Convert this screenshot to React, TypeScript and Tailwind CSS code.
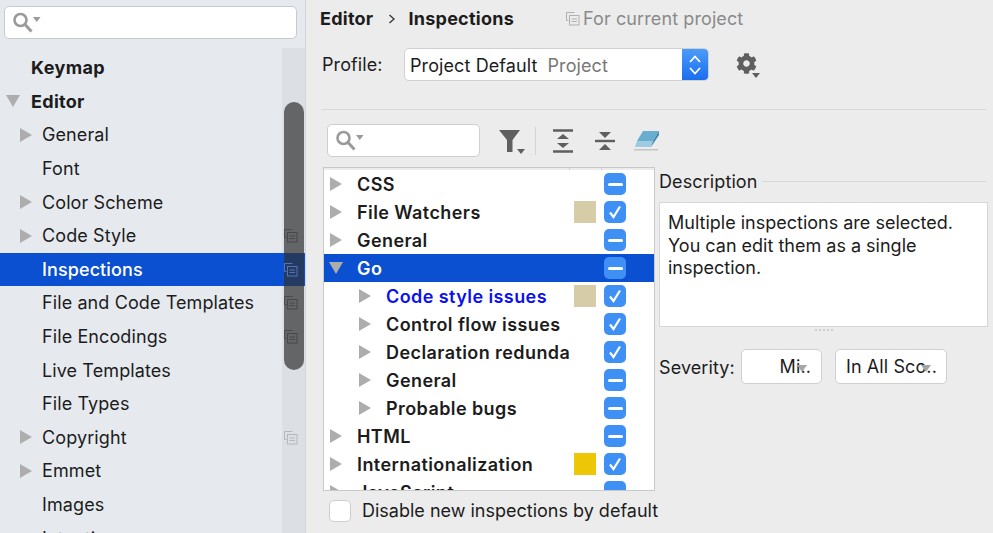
import { FaCog } from "react-icons/fa"

const FONT = "font-['Inter','Liberation_Sans',sans-serif]"

interface NavItem {
  label: string
  arrow?: boolean
  scoped?: boolean
}

const navItems: NavItem[] = [
  { label: "General", arrow: true },
  { label: "Font" },
  { label: "Color Scheme", arrow: true },
  { label: "Code Style", arrow: true, scoped: true },
  { label: "Inspections", scoped: true },
  { label: "File and Code Templates", scoped: true },
  { label: "File Encodings", scoped: true },
  { label: "Live Templates" },
  { label: "File Types" },
  { label: "Copyright", arrow: true, scoped: true },
  { label: "Emmet", arrow: true },
  { label: "Images" },
  { label: "Intentions" },
]

interface InspectionRow {
  label: string
  depth: 0 | 1
  state: "mixed" | "checked"
  swatch?: string
  selected?: boolean
  blue?: boolean
}

const rows: InspectionRow[] = [
  { label: "CSS", depth: 0, state: "mixed" },
  { label: "File Watchers", depth: 0, state: "checked", swatch: "bg-[#d6cda8]" },
  { label: "General", depth: 0, state: "mixed" },
  { label: "Go", depth: 0, state: "mixed", selected: true },
  { label: "Code style issues", depth: 1, state: "checked", swatch: "bg-[#d6cda8]", blue: true },
  { label: "Control flow issues", depth: 1, state: "checked" },
  { label: "Declaration redunda", depth: 1, state: "checked" },
  { label: "General", depth: 1, state: "mixed" },
  { label: "Probable bugs", depth: 1, state: "mixed" },
  { label: "HTML", depth: 0, state: "mixed" },
  { label: "Internationalization", depth: 0, state: "checked", swatch: "bg-[#edc706]" },
  { label: "JavaScript", depth: 0, state: "mixed" },
]

function Arrow({ down = false }: { down?: boolean }) {
  return (
    <svg width="14" height="14" viewBox="0 0 14 14" className="shrink-0">
      {down ? (
        <polygon points="0,1 14,1 7,13" fill="#adadad" />
      ) : (
        <polygon points="1,0 13,7 1,14" fill="#adadad" />
      )}
    </svg>
  )
}

function ScopeIcon({ color = "#b4b8bc" }: { color?: string }) {
  return (
    <svg width="15" height="15" viewBox="0 0 15 15" fill="none" stroke={color} strokeWidth="1" className="relative z-10 shrink-0">
      <path d="M9.5 1.5H1.5V9.5H3.5" />
      <rect x="4.5" y="4.5" width="9.5" height="9.5" />
      <path d="M6.5 8H12M6.5 10.5H12" />
    </svg>
  )
}

function SearchIcon() {
  return (
    <svg width="28" height="22" viewBox="0 0 28 22" fill="none" className="shrink-0">
      <circle cx="7.5" cy="8" r="6" stroke="#9a9a9a" strokeWidth="2.6" />
      <path d="M12 12.5L18.5 19.5" stroke="#9a9a9a" strokeWidth="3" />
      <polygon points="20,5 27.5,5 23.75,10" fill="#9a9a9a" />
    </svg>
  )
}

function TriCheck({ state }: { state: "mixed" | "checked" }) {
  return (
    <span className="flex h-[22px] w-[22px] shrink-0 items-center justify-center rounded-[5px] bg-[#3f90f5]">
      {state === "mixed" ? (
        <span className="h-[3px] w-[15px] rounded-sm bg-white" />
      ) : (
        <svg width="14" height="14" viewBox="0 0 14 14" fill="none">
          <path d="M2 7.5L5.5 12L12 1.5" stroke="white" strokeWidth="2.2" />
        </svg>
      )}
    </span>
  )
}

function SmallCaret() {
  return (
    <svg width="10" height="7" viewBox="0 0 10 7" className="absolute">
      <polygon points="0,0 10,0 5,7" fill="#a6a6a6" />
    </svg>
  )
}

export default function App() {
  return (
    <div className={`flex h-[533px] w-[993px] overflow-hidden bg-[#ececec] text-[18px] tracking-[0.1px] text-[#1c1c1c] ${FONT}`}>
      {/* Left settings tree */}
      <aside className="relative flex h-full w-[306px] shrink-0 flex-col border-r border-[#d2d4d7] bg-[#e6eaef]">
        <div className="mx-[4px] mt-[6px] flex h-[33px] w-[293px] items-center rounded-[5px] border border-[#c6cacf] bg-white pl-[8px]">
          <SearchIcon />
        </div>
        <div className="relative mt-[9px] flex-1 overflow-hidden">
          <div className="absolute bottom-0 right-0 top-0 w-[23px] bg-[#dcdfe4]" />
          <div className="relative pt-[3px]">
            <div className="flex h-[33.6px] items-center pl-[31px] font-bold tracking-[0.4px]">Keymap</div>
            <div className="flex h-[33.6px] items-center gap-[11px] pl-[6px] font-bold tracking-[0.3px]">
              <Arrow down />
              Editor
            </div>
            {navItems.map((item) => {
              const selected = item.label === "Inspections"
              const underThumb = item.scoped && item.label !== "Copyright"
              return (
                <div
                  key={item.label}
                  className={`flex h-[33.6px] items-center pr-[7px] ${selected ? "bg-[#0a50d1] font-medium text-white" : ""}`}
                >
                  <span className="flex w-[42px] shrink-0 justify-start pl-[19px]">{item.arrow && <Arrow />}</span>
                  <span className="flex-1">{item.label}</span>
                  {item.scoped && <ScopeIcon color={selected ? "#5274b8" : underThumb ? "#48494b" : "#b4b8bc"} />}
                </div>
              )
            })}
          </div>
          {/* scrollbar thumb */}
          <div className="absolute right-[1px] top-[54px] h-[268px] w-[20px] rounded-[10px] bg-[#303030]/70" />
        </div>
      </aside>

      {/* Right panel */}
      <main className="flex min-w-0 flex-1 flex-col pl-[15px]">
        <div className="-ml-px flex h-[36px] items-center pt-[1px]">
          <span className="font-bold tracking-[0.25px]">Editor</span>
          <svg width="8" height="10" viewBox="0 0 8 10" fill="none" className="ml-[15px] mr-[12px]">
            <path d="M1.5 1L6 5L1.5 9" stroke="#333" strokeWidth="1.3" />
          </svg>
          <span className="font-bold tracking-[0.25px]">Inspections</span>
          <span className="ml-[51px]">
            <ScopeIcon color="#b0b0b0" />
          </span>
          <span className="ml-[3px] text-[#8a8a8a]">For current project</span>
        </div>

        <div className="mt-[12px] flex h-[33px] items-center pl-[1px]">
          <span className="w-[82px]">Profile:</span>
          <div className="flex h-[33px] w-[305px] overflow-hidden rounded-[5px] border border-[#d0d0d0] bg-white">
            <div className="flex flex-1 items-center gap-[10px] pl-[5px] pt-[1px]">
              <span>Project Default</span>
              <span className="text-[#777]">Project</span>
            </div>
            <div className="flex w-[26px] items-center justify-center bg-gradient-to-b from-[#4b9bf8] to-[#1a6df0]">
              <svg width="14" height="24" viewBox="0 0 14 24" fill="none" stroke="white" strokeWidth="1.8">
                <path d="M2 9L7 3.5L12 9M2 15L7 20.5L12 15" />
              </svg>
            </div>
          </div>
          <span className="relative ml-[27px] flex h-[24px] w-[26px] text-[#5f5f5f]">
            <FaCog size={21} />
            <svg width="8" height="5" viewBox="0 0 8 5" className="absolute bottom-[-1px] right-[2px]">
              <polygon points="0,0 8,0 4,5" fill="#5f5f5f" />
            </svg>
          </span>
        </div>

        <div className="mt-[28px] h-px w-[665px] bg-[#d8d8d8]" />

        <div className="ml-[6px] mt-[14px] flex h-[33px] items-center">
          <div className="flex h-[33px] w-[153px] items-center rounded-[5px] border border-[#cfcfcf] bg-white pl-[8px]">
            <SearchIcon />
          </div>
          <svg width="26" height="28" viewBox="0 0 26 28" className="ml-[19px]">
            <polygon points="0,3 21,3 13.5,13 13.5,25 8,25 8,13" fill="#5f5f5f" />
            <polygon points="18,22 26,22 22,27" fill="#5f5f5f" />
          </svg>
          <div className="ml-[10px] h-[28px] w-px bg-[#d4d4d4]" />
          <svg width="22" height="24" viewBox="0 0 22 24" className="ml-[16px]">
            <path d="M1 1.5H21M1 22.5H21" stroke="#5f5f5f" strokeWidth="2.4" />
            <polygon points="11,5 17,10 5,10" fill="#5f5f5f" />
            <polygon points="11,19 17,14 5,14" fill="#5f5f5f" />
          </svg>
          <svg width="20" height="22" viewBox="0 0 20 22" className="ml-[21px]">
            <path d="M0 11H20" stroke="#5f5f5f" strokeWidth="2.4" />
            <polygon points="10,8 16,2 4,2" fill="#5f5f5f" />
            <polygon points="10,14 16,20 4,20" fill="#5f5f5f" />
          </svg>
          <svg width="26" height="24" viewBox="0 0 26 24" className="ml-[19px]">
            <polygon points="9,2 25,2 19,12 3,12" fill="#69aed0" />
            <polygon points="3,12 19,12 17,18 1,18" fill="#9ccbe2" />
            <polygon points="25,2 25,6 17,18 19,12" fill="#3f87ab" />
            <rect x="0" y="20" width="24" height="1.5" fill="#c4c4c4" />
          </svg>
        </div>

        <div className="ml-[2px] mt-[10px] flex items-start">
          {/* Inspection table */}
          <div className="flex w-[332px] shrink-0 flex-col">
            <div className="h-[324px] overflow-hidden border border-[#c9c9c9] bg-white">
              <div className="flex h-[2px] justify-end bg-[#ececec] pr-[52px]">
                <span className="h-full w-px bg-[#d0d0d0]" />
                <span className="ml-[31px] h-full w-px bg-[#d0d0d0]" />
              </div>
              {rows.map((row) => (
                <div
                  key={row.label + row.depth}
                  className={`flex h-[28px] items-center font-semibold tracking-[0.42px] ${row.selected ? "bg-[#0a50d1] text-white" : ""} ${row.blue ? "text-[#0a10f0]" : ""}`}
                >
                  <span className={`flex shrink-0 ${row.depth === 1 ? "w-[62px] pl-[34px]" : "w-[33px] pl-[5px]"}`}>
                    <Arrow down={row.selected} />
                  </span>
                  <span className="flex-1 overflow-hidden whitespace-nowrap">{row.label}</span>
                  {row.swatch && <span className={`mr-[8px] h-[22px] w-[22px] shrink-0 ${row.swatch}`} />}
                  <span className="mr-[28px]">
                    <TriCheck state={row.state} />
                  </span>
                </div>
              ))}
            </div>
            <div className="mt-[6px] flex items-center pl-[6px]">
              <span className="h-[22px] w-[22px] shrink-0 rounded-[5px] border border-[#cfcfcf] bg-white" />
              <span className="ml-[11px] whitespace-nowrap tracking-normal">Disable new inspections by default</span>
            </div>
          </div>

          {/* Description side */}
          <div className="ml-[4px] flex w-[330px] shrink-0 flex-col">
            <div className="flex h-[28px] items-center pt-[1px]">
              <span className="shrink-0">Description</span>
              <span className="ml-[5px] mr-[3px] h-px flex-1 bg-[#d8d8d8]" />
            </div>
            <div className="mt-[7px] h-[125px] w-[329px] border border-[#d6d6d6] bg-white px-[8px] pt-[9px] leading-[22.5px] tracking-normal">
              <p>Multiple inspections are selected.</p>
              <p>You can edit them as a single</p>
              <p>inspection.</p>
            </div>
            <div className="flex h-[22px] justify-center gap-[2px] pt-[2px]">
              {[0, 1, 2, 3, 4].map((dot) => (
                <span key={dot} className="h-[2px] w-[2px] bg-[#cfcfcf]" />
              ))}
            </div>
            <div className="flex h-[35px] items-center">
              <span className="w-[82px] pt-[1px]">Severity:</span>
              <div className="relative flex h-[35px] w-[81px] items-center justify-end rounded-[5px] border border-[#d0d0d0] bg-white pr-[10px]">
                Mi..
                <span className="absolute right-[24px] top-[15px]">
                  <SmallCaret />
                </span>
              </div>
              <div className="relative ml-[13px] flex h-[35px] w-[112px] items-center rounded-[5px] border border-[#d0d0d0] bg-white pl-[10px] whitespace-nowrap">
                In All Sco..
                <span className="absolute right-[25px] top-[15px]">
                  <SmallCaret />
                </span>
              </div>
            </div>
          </div>
        </div>
      </main>
    </div>
  )
}
